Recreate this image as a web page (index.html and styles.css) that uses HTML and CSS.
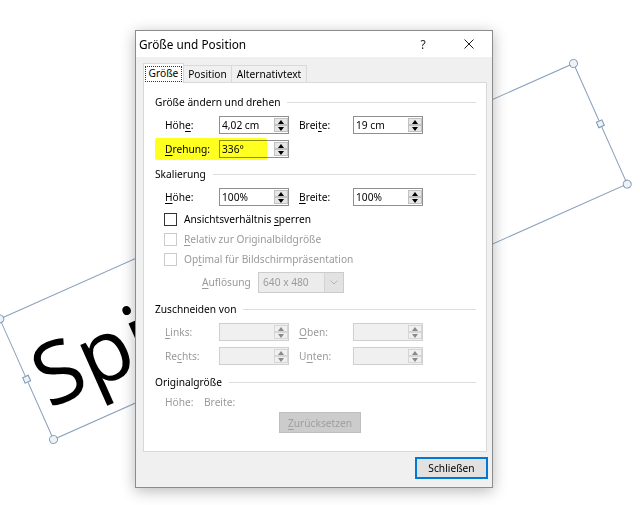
FILE: index.html
```html
<!DOCTYPE html>
<html lang="de">
<head>
<meta charset="utf-8">
<title>Größe und Position</title>
<link rel="stylesheet" href="styles.css">
</head>
<body>
<div class="shape">
  <span class="shape-text">Spiegel</span>
  <span class="handle corner h-tl"></span>
  <span class="handle corner h-tr"></span>
  <span class="handle corner h-bl"></span>
  <span class="handle corner h-br"></span>
  <span class="handle side h-ml"></span>
  <span class="handle side h-mr"></span>
  <span class="handle side h-mt"></span>
  <span class="handle side h-mb"></span>
</div>

<div class="dialog">
  <div class="titlebar">
    <span class="title">Größe und Position</span>
    <span class="tb-btn help">?</span>
    <span class="tb-btn close"><svg width="10" height="10" viewBox="0 0 10 10"><path d="M0.5 0.5L9.5 9.5M9.5 0.5L0.5 9.5" stroke="#1a1a1a" stroke-width="1" fill="none"/></svg></span>
  </div>
  <div class="dbody">
    <div class="tabs">
      <span class="tab active t1"><span class="focus">Größe</span></span>
      <span class="tab t2">Position</span>
      <span class="tab t3">Alternativtext</span>
    </div>
    <div class="panel">
      <div class="group g1">
        <div class="ghead">Größe ändern und drehen</div>
        <div class="grid">
          <span class="lbl">Höh<u>e</u>:</span>
          <span class="field"><span class="val">4,02 cm</span><span class="spin"><span class="up"></span><span class="down"></span></span></span>
          <span class="lbl lbl2">Brei<u>t</u>e:</span>
          <span class="field"><span class="val">19 cm</span><span class="spin"><span class="up"></span><span class="down"></span></span></span>
          <span class="lbl"><u>D</u>rehung:</span>
          <span class="field"><span class="val">336°</span><span class="spin"><span class="up"></span><span class="down"></span></span></span>
          <span class="hl"></span>
        </div>
      </div>
      <div class="group g2">
        <div class="ghead">Skalierung</div>
        <div class="grid">
          <span class="lbl"><u>H</u>öhe:</span>
          <span class="field"><span class="val">100%</span><span class="spin"><span class="up"></span><span class="down"></span></span></span>
          <span class="lbl lbl2"><u>B</u>reite:</span>
          <span class="field"><span class="val">100%</span><span class="spin"><span class="up"></span><span class="down"></span></span></span>
        </div>
        <div class="check"><span class="box"></span><span>Ansichtsverhältnis <u>s</u>perren</span></div>
        <div class="check disabled"><span class="box"></span><span><u>R</u>elativ zur Originalbildgröße</span></div>
        <div class="check disabled"><span class="box"></span><span>Op<u>t</u>imal für Bildschirmpräsentation</span></div>
        <div class="aufl disabled">
          <span class="aufl-lbl"><u>A</u>uflösung</span>
          <span class="combo"><span class="combo-val">640 x 480</span><span class="combo-btn"><svg width="8" height="5" viewBox="0 0 8 5"><path d="M0.5 0.5L4 4L7.5 0.5" stroke="#b5b5b5" fill="none"/></svg></span></span>
        </div>
      </div>
      <div class="group g3">
        <div class="ghead">Zuschneiden von</div>
        <div class="grid disabled">
          <span class="lbl"><u>L</u>inks:</span>
          <span class="field off"><span class="val"></span><span class="spin"><span class="up"></span><span class="down"></span></span></span>
          <span class="lbl lbl2"><u>O</u>ben:</span>
          <span class="field off"><span class="val"></span><span class="spin"><span class="up"></span><span class="down"></span></span></span>
          <span class="lbl">Re<u>c</u>hts:</span>
          <span class="field off"><span class="val"></span><span class="spin"><span class="up"></span><span class="down"></span></span></span>
          <span class="lbl lbl2">U<u>n</u>ten:</span>
          <span class="field off"><span class="val"></span><span class="spin"><span class="up"></span><span class="down"></span></span></span>
        </div>
      </div>
      <div class="group g4">
        <div class="ghead">Originalgröße</div>
        <div class="orig disabled"><span class="orig-h">Höhe:</span><span>Breite:</span></div>
        <div class="reset-row"><span class="btn reset"><u>Z</u>urücksetzen</span></div>
      </div>
    </div>
    <div class="footer"><span class="btn close-btn">Schließen</span></div>
  </div>
</div>
</body>
</html>
```

FILE: styles.css
```css
* { box-sizing: border-box; }
html, body { margin: 0; padding: 0; }
body {
  width: 640px;
  height: 505px;
  overflow: hidden;
  position: relative;
  background: #ffffff;
  font-family: "Noto Sans", "Open Sans", sans-serif;
  font-size: 10.2px;
  color: #000;
}
u { text-decoration-thickness: 1px; text-underline-offset: 1.5px; }

/* Slide shape behind the dialog */
.shape {
  position: absolute;
  left: -1.5px;
  top: 184.5px;
  width: 629px;
  height: 133px;
  border: 1px solid #8aa2bc;
  transform: rotate(-24deg);
  display: flex;
  align-items: center;
  padding-left: 8px;
  padding-top: 6px;
}
.shape-text {
  font-family: "Open Sans", "Noto Sans", sans-serif;
  font-size: 86px;
  line-height: 1;
  color: #000;
}
.handle {
  position: absolute;
  border: 1px solid #7d97b3;
  background: #eef2f5;
}
.corner { width: 9px; height: 9px; border-radius: 50%; }
.side { width: 7px; height: 7px; }
.h-tl { left: -5px; top: -5px; }
.h-tr { right: -5px; top: -5px; }
.h-bl { left: -5px; bottom: -5px; }
.h-br { right: -5px; bottom: -5px; }
.h-ml { left: -4px; top: calc(50% - 3.5px); }
.h-mr { right: -4px; top: calc(50% - 3.5px); }
.h-mt { top: -4px; left: calc(50% - 3.5px); }
.h-mb { bottom: -4px; left: calc(50% - 3.5px); }

/* Dialog window */
.dialog {
  position: absolute;
  left: 135px;
  top: 30px;
  width: 358px;
  border: 1px solid #8c8c8c;
  background: #f0f0f0;
  box-shadow: 0 3px 14px rgba(0, 0, 0, 0.28);
}
.titlebar {
  height: 26px;
  background: #ffffff;
  display: flex;
  align-items: center;
  padding-left: 3px;
}
.title { flex: 1; font-size: 11.8px; color: #000; }
.tb-btn {
  width: 46px;
  height: 26px;
  display: flex;
  align-items: center;
  justify-content: center;
}
.help { font-size: 12px; color: #222; }

.dbody { padding: 6px 5px 8px 7px; display: flex; flex-direction: column; }

.tabs { display: flex; align-items: flex-end; height: 19px; }
.tab {
  height: 17px;
  border: 1px solid #d9d9d9;
  border-bottom: none;
  background: #f0f0f0;
  display: flex;
  align-items: center;
  justify-content: center;
  margin-left: -1px;
}
.tab.active {
  height: 20px;
  margin-bottom: -1px;
  margin-left: 0;
  background: #ffffff;
  position: relative;
  z-index: 1;
}
.t1 { width: 41px; }
.t2 { width: 49px; }
.t3 { width: 76px; }
.focus {
  border: 1px dotted #333;
  padding: 0 2px;
  line-height: 13px;
  height: 16px;
  display: flex;
  align-items: center;
  width: 37px;
  justify-content: center;
}

.panel {
  background: #ffffff;
  border: 1px solid #d9d9d9;
  padding: 0 10px 18px 11px;
  display: flex;
  flex-direction: column;
}
.group { display: flex; flex-direction: column; }
.g1 { margin-top: 11px; }
.g2 { margin-top: 5px; }
.g3, .g4 { margin-top: 6px; }

.ghead {
  display: flex;
  align-items: center;
  height: 16px;
  white-space: nowrap;
}
.ghead::after {
  content: "";
  flex: 1;
  height: 1px;
  background: #dddddd;
  margin-left: 7px;
}

.grid {
  position: relative;
  display: grid;
  grid-template-columns: 54px 80px 54px 70px;
  grid-auto-rows: 24px;
  align-items: center;
  padding-left: 10px;
  margin-top: 3px;
}
.lbl { white-space: nowrap; }
.field {
  display: flex;
  width: 70px;
  height: 18px;
  border: 1px solid #8f8f8f;
  background: #ffffff;
}
.val { flex: 1; padding-left: 2px; line-height: 16px; }
.spin {
  width: 14px;
  display: flex;
  flex-direction: column;
  padding: 1px 0;
}
.spin span {
  flex: 1;
  background: #e6e6e6;
  border: 1px solid #c2c2c2;
  display: flex;
  align-items: center;
  justify-content: center;
}
.spin .up::before,
.spin .down::before {
  content: "";
  width: 0;
  height: 0;
  border-left: 3.5px solid transparent;
  border-right: 3.5px solid transparent;
}
.spin .up::before { border-bottom: 4px solid #000; }
.spin .down::before { border-top: 4px solid #000; }

.field.off { border-color: #cfcfcf; background: #f0f0f0; }
.field.off .spin span { background: #f0f0f0; border-color: #d6d6d6; }
.field.off .spin .up::before { border-bottom-color: #8a8a8a; }
.field.off .spin .down::before { border-top-color: #8a8a8a; }

.hl {
  position: absolute;
  left: 0;
  top: 25px;
  width: 112px;
  height: 22px;
  background: #ffff20;
  mix-blend-mode: multiply;
  border-radius: 2px;
}

.disabled { color: #9a9a9a; }

.check {
  display: flex;
  align-items: center;
  gap: 7px;
  height: 20px;
  padding-left: 9px;
}
.box {
  width: 13px;
  height: 13px;
  border: 1px solid #333333;
  background: #ffffff;
}
.check.disabled .box { border-color: #cccccc; }

.aufl {
  display: flex;
  align-items: center;
  height: 26px;
  padding-left: 47px;
}
.aufl-lbl { width: 56px; }
.combo {
  display: flex;
  width: 86px;
  height: 21px;
  border: 1px solid #cccccc;
  background: #ececec;
}
.combo-val { flex: 1; padding-left: 4px; line-height: 19px; }
.combo-btn {
  width: 19px;
  border-left: 1px solid #d4d4d4;
  background: #e2e2e2;
  display: flex;
  align-items: center;
  justify-content: center;
}

.orig {
  display: flex;
  height: 16px;
  align-items: center;
  margin-top: 4px;
  padding-left: 10px;
}
.orig-h { width: 39px; }

.reset-row { display: flex; margin-top: 2px; padding-left: 124px; }
.btn {
  display: flex;
  align-items: center;
  justify-content: center;
}
.reset {
  width: 82px;
  height: 21px;
  background: #cccccc;
  border: 1px solid #bfbfbf;
  color: #9f9f9f;
}

.footer { display: flex; justify-content: flex-end; margin-top: 5px; }
.close-btn {
  width: 73px;
  height: 22px;
  background: #e1e1e1;
  border: 1px solid #0078d7;
  box-shadow: inset 0 0 0 1px #0078d7;
  color: #000;
  margin-right: -1px;
}
```
